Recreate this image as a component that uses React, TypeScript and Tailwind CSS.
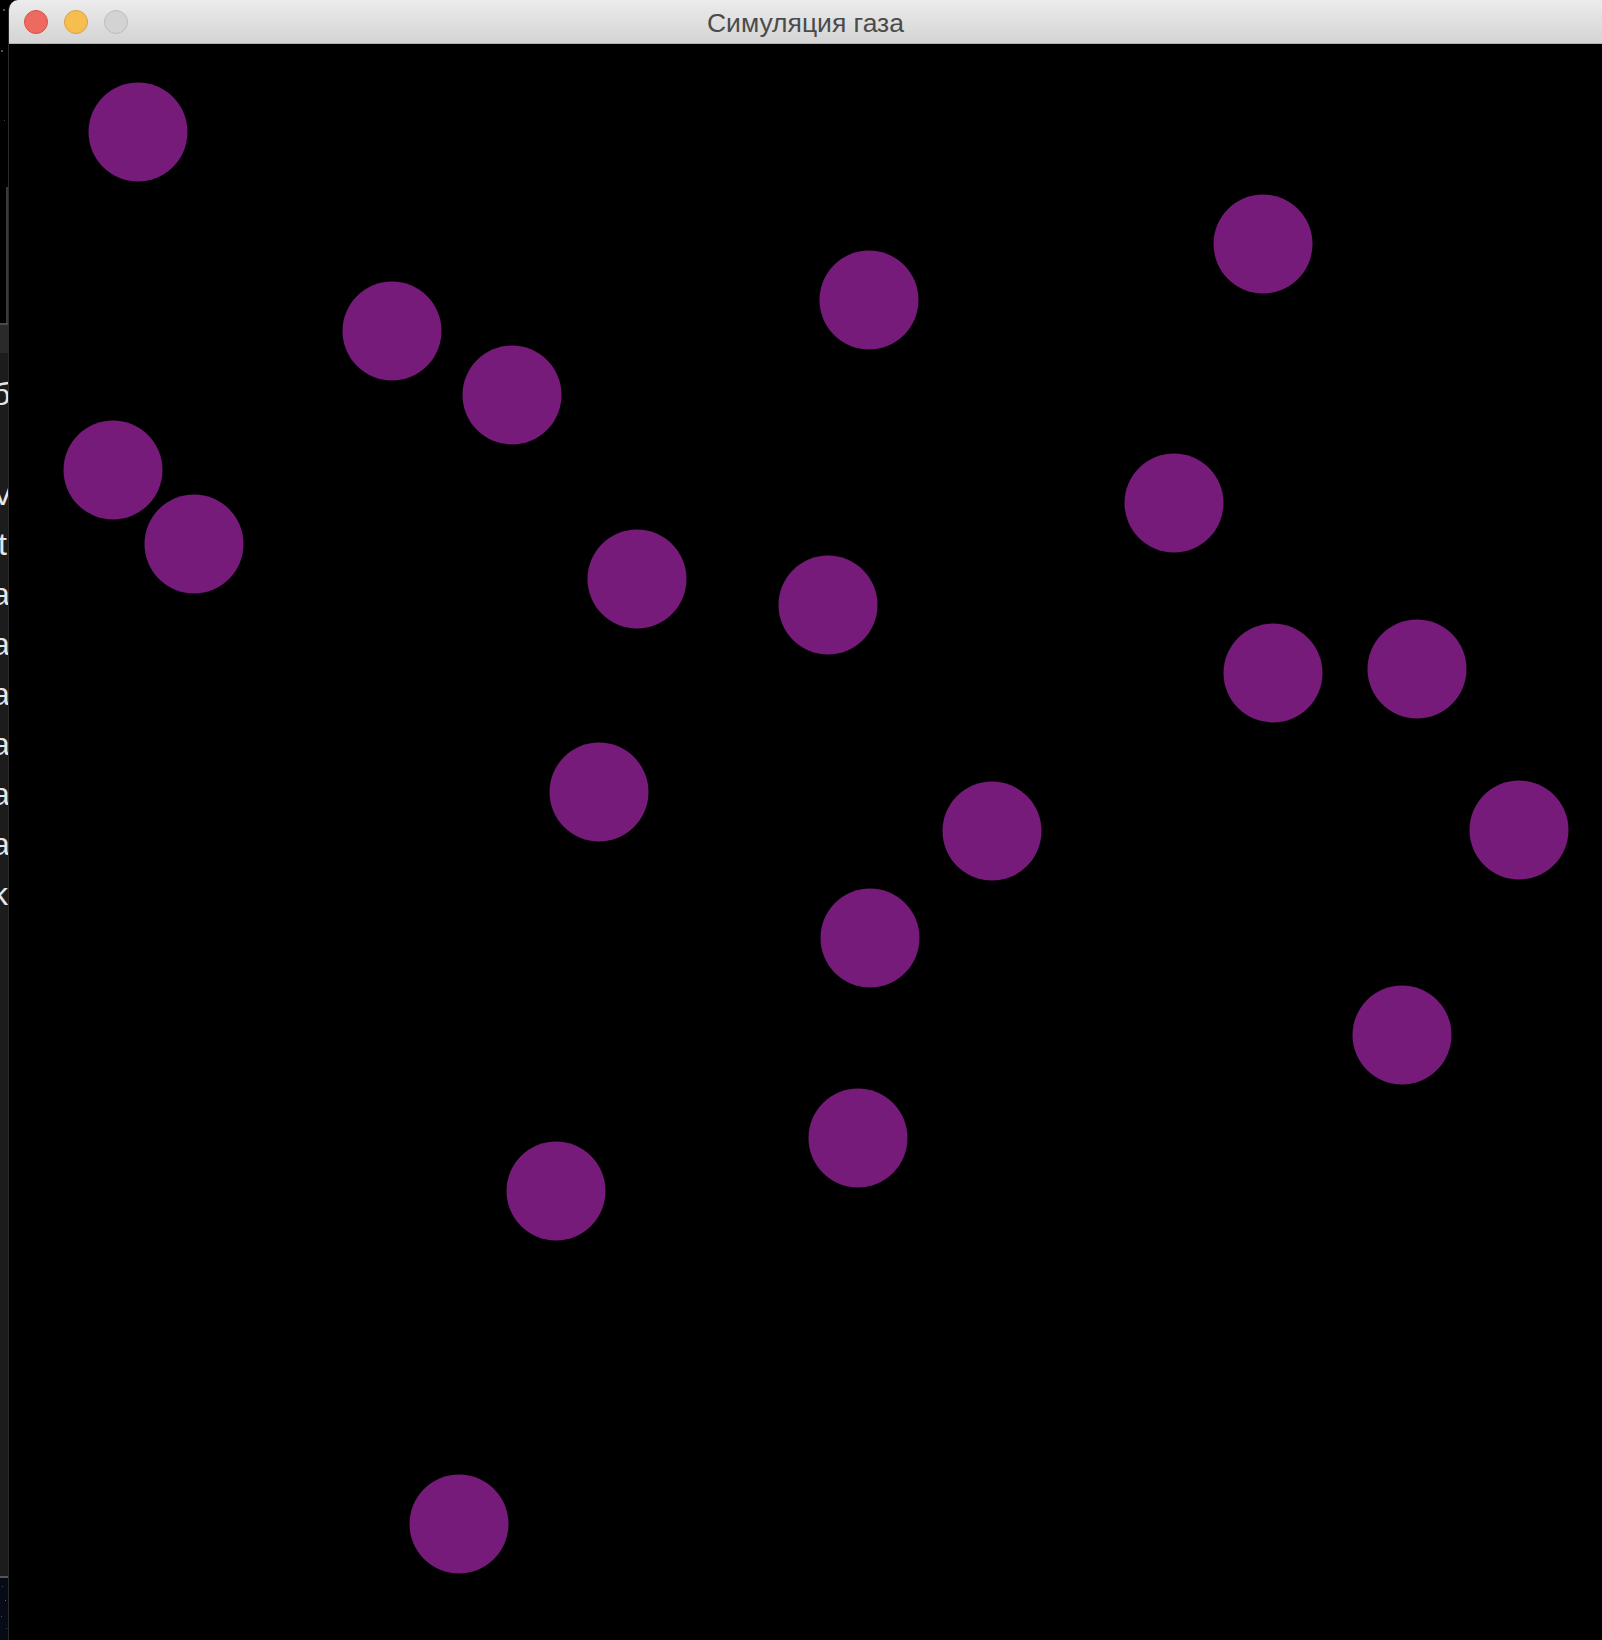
import React from "react";

const circles: [number, number][] = [
  [137, 132],
  [391, 331],
  [511, 395],
  [868, 300],
  [1262, 244],
  [112, 470],
  [193, 544],
  [636, 579],
  [827, 605],
  [1173, 503],
  [1272, 673],
  [1416, 669],
  [598, 792],
  [991, 831],
  [1518, 830],
  [869, 938],
  [1401, 1035],
  [857, 1138],
  [555, 1191],
  [458, 1524],
];

const letters = ["б", "\u00a0", "V", "t", "a", "a", "a", "a", "a", "a", "k"];

export default function App() {
  return (
    <div className="w-[1602px] h-[1640px] flex flex-row bg-black overflow-hidden">
      {/* background window strip on the left */}
      <div className="w-[8px] flex flex-col shrink-0 overflow-hidden">
        <div className="h-[187px] bg-black relative">
          <div className="absolute left-[3px] top-[9px] w-[2px] h-[2px] bg-[#2f6b33]" />
          <div className="absolute left-[1px] top-[50px] w-[2px] h-[2px] bg-[#2f6b33]" />
          <div className="absolute left-[4px] top-[120px] w-[1px] h-[1px] bg-[#1f4a50]" />
        </div>
        <div className="h-[136px] flex flex-row">
          <div className="w-[6px] bg-black" />
          <div className="w-[2px] bg-[#3a3a3a]" />
        </div>
        <div className="h-[2px] bg-[#4a4a4a]" />
        <div className="h-[28px] bg-[#2a2a2c]" />
        <div
          className="flex-1 bg-[#1c1c1c] flex flex-col pt-[16px]"
          style={{ fontFamily: '"Liberation Sans", Arial, sans-serif' }}
        >
          {letters.map((l, i) => (
            <div
              key={i}
              className={
                l === "t"
                  ? "h-[50px] leading-[50px] text-[32px] text-[#e6e6e6] ml-[-2px] whitespace-nowrap"
                  : "h-[50px] leading-[50px] text-[32px] text-[#e6e6e6] ml-[-8px] whitespace-nowrap"
              }
            >
              {l}
            </div>
          ))}
        </div>
        <div className="h-[2px] bg-[#555555]" />
        <div className="h-[62px] bg-[#070b18] relative">
          <div className="absolute left-[2px] top-[8px] w-[1px] h-[1px] bg-[#3a4f8a]" />
          <div className="absolute left-[5px] top-[22px] w-[1px] h-[1px] bg-[#6a6a3a]" />
          <div className="absolute left-[1px] top-[38px] w-[1px] h-[1px] bg-[#3a4f8a]" />
          <div className="absolute left-[6px] top-[50px] w-[1px] h-[1px] bg-[#2a3f7a]" />
        </div>
      </div>

      {/* main window */}
      <div className="flex-1 flex flex-col rounded-tl-[10px] overflow-hidden border-l border-[#2a2a2a]">
        <div className="h-[43px] shrink-0 grid grid-cols-[1fr_auto_1fr] items-center bg-gradient-to-b from-[#ececec] to-[#d4d4d4]">
          <div className="flex flex-row items-center gap-[16px] pl-[15px]">
            <div className="w-[24px] h-[24px] rounded-full bg-[#ee6a5f] border border-[#d4544a]" />
            <div className="w-[24px] h-[24px] rounded-full bg-[#f6be4f] border border-[#d9a23e]" />
            <div className="w-[24px] h-[24px] rounded-full bg-[#d3d3d3] border border-[#bcbcbc]" />
          </div>
          <div
            className="text-[26.5px] text-[#4b4b4b] leading-none pt-[4px]"
            style={{ fontFamily: '"Liberation Sans", Arial, sans-serif' }}
          >
            Симуляция газа
          </div>
          <div />
        </div>
        <div className="h-[1px] shrink-0 bg-[#b2b2b2]" />
        <div className="flex-1 bg-black">
          <svg width="1594" height="1596" className="block">
            {circles.map(([x, y], i) => (
              <circle key={i} cx={x - 8} cy={y - 44} r={49.5} fill="#761b7a" />
            ))}
          </svg>
        </div>
      </div>
    </div>
  );
}
